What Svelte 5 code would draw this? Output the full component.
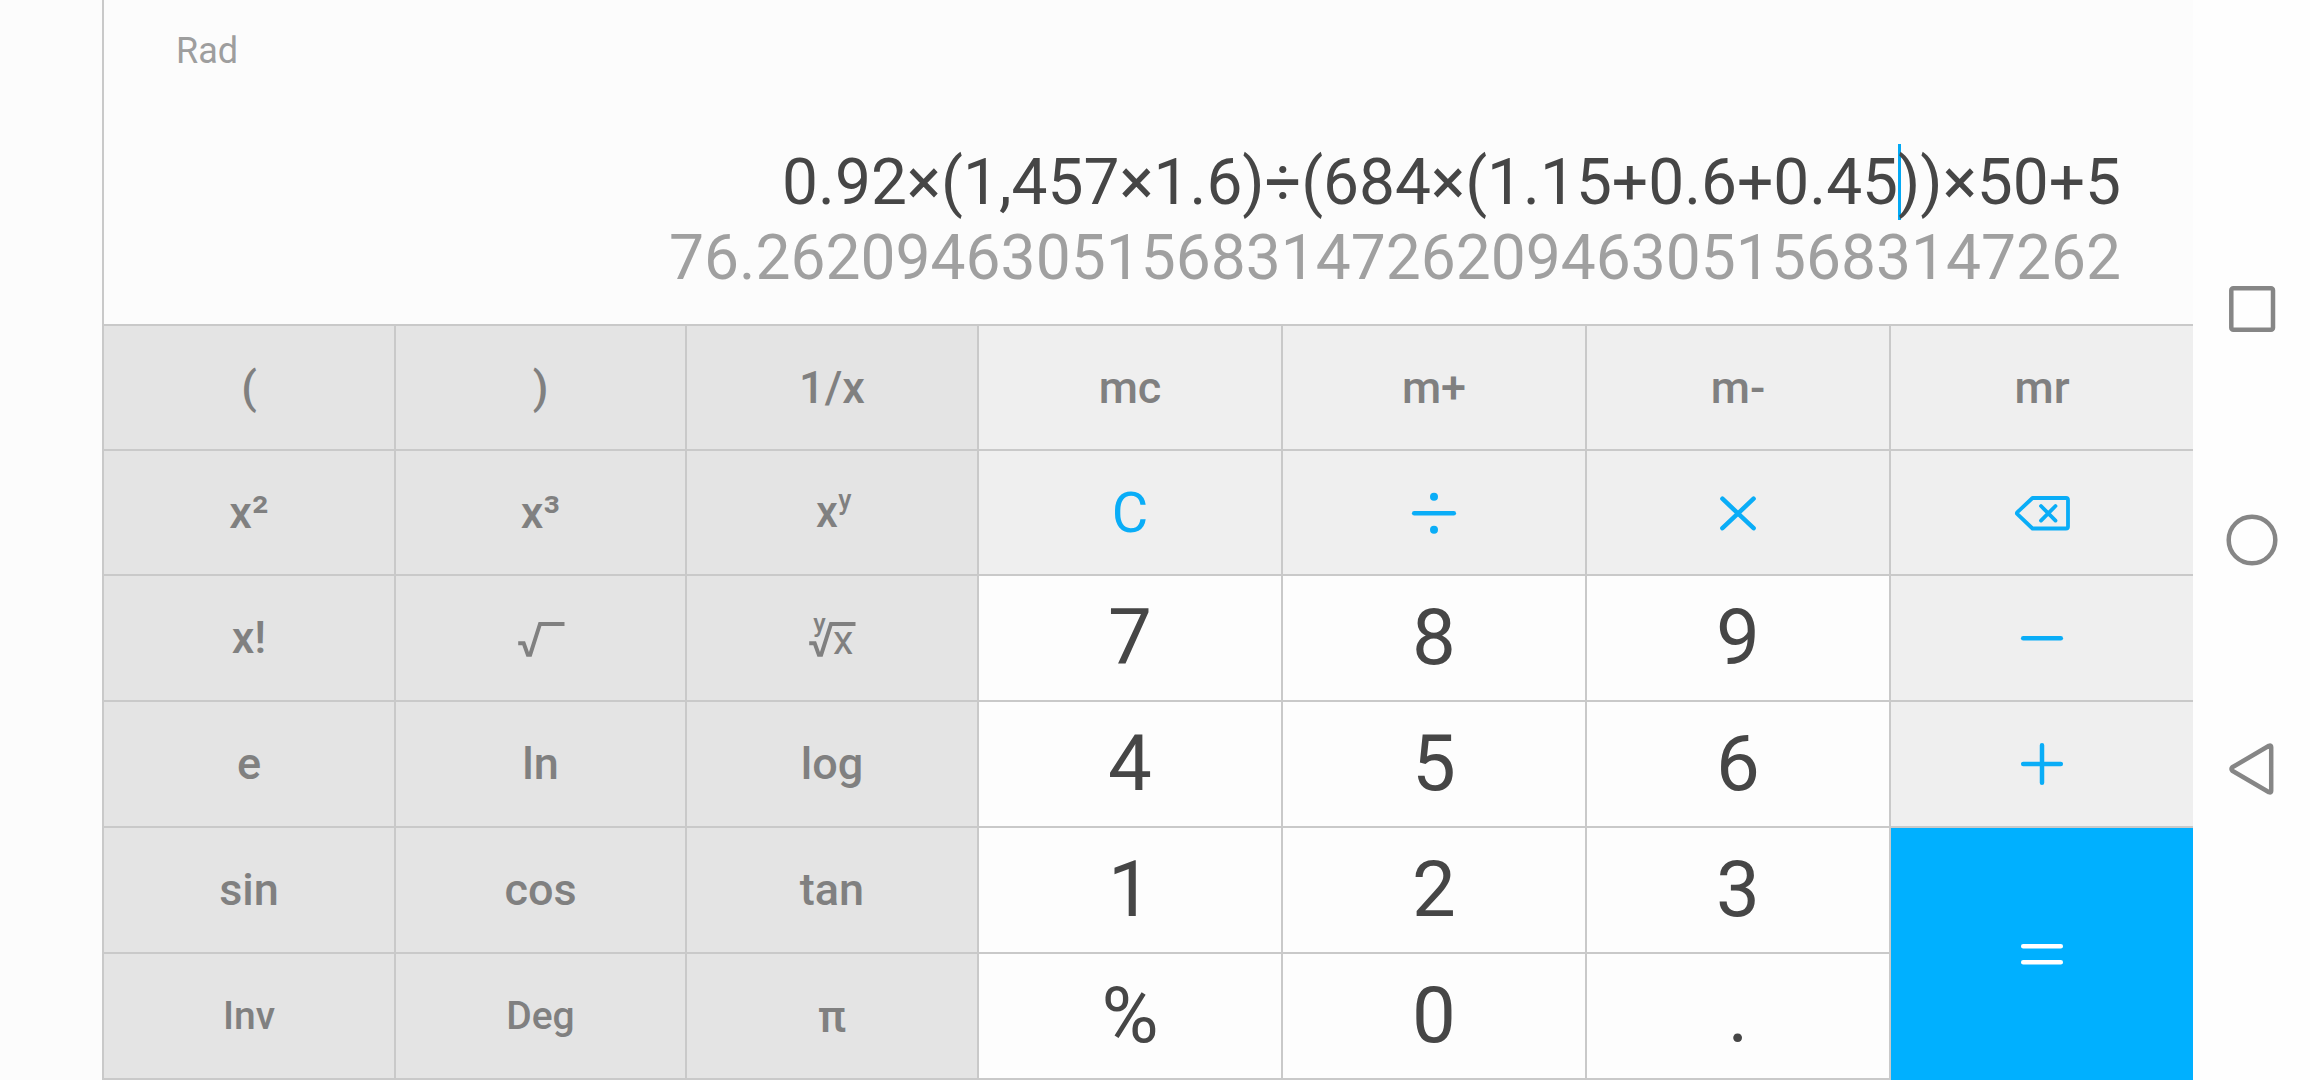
<script>
  const before = '0.92×(1,457×1.6)÷(684×(1.15+0.6+0.45';
  const after = '))×50+5';
  const result = '76.262094630515683147262094630515683147262';

  // kind: sci = scientific, mem = memory/operator, num = digit
  const keys = [
    { t: '(', kind: 'sci' }, { t: ')', kind: 'sci' }, { t: '1/x', kind: 'sci' },
    { t: 'mc', kind: 'mem' }, { t: 'm+', kind: 'mem' }, { t: 'm-', kind: 'mem' }, { t: 'mr', kind: 'mem' },
    { t: 'x²', kind: 'sci' }, { t: 'x³', kind: 'sci' }, { icon: 'pow', kind: 'sci' },
    { t: 'C', kind: 'mem clear' }, { icon: 'divide', kind: 'mem' }, { icon: 'times', kind: 'mem' }, { icon: 'back', kind: 'mem' },
    { t: 'x!', kind: 'sci raised' }, { icon: 'sqrt', kind: 'sci' }, { icon: 'root', kind: 'sci' },
    { t: '7', kind: 'num' }, { t: '8', kind: 'num' }, { t: '9', kind: 'num' }, { icon: 'minus', kind: 'mem' },
    { t: 'e', kind: 'sci raised' }, { t: 'ln', kind: 'sci raised' }, { t: 'log', kind: 'sci raised' },
    { t: '4', kind: 'num' }, { t: '5', kind: 'num' }, { t: '6', kind: 'num' }, { icon: 'plus', kind: 'mem' },
    { t: 'sin', kind: 'sci raised' }, { t: 'cos', kind: 'sci raised' }, { t: 'tan', kind: 'sci raised' },
    { t: '1', kind: 'num' }, { t: '2', kind: 'num' }, { t: '3', kind: 'num' }, { icon: 'equals', kind: 'equals' },
    { t: 'Inv', kind: 'sci small' }, { t: 'Deg', kind: 'sci small' }, { t: 'π', kind: 'sci' },
    { t: '%', kind: 'num' }, { t: '0', kind: 'num' }, { t: '.', kind: 'num' }
  ];
</script>

<div class="screen">
  <div class="gutter"></div>
  <main class="calculator">
    <section class="display">
      <div class="mode">Rad</div>
      <div class="expression">{before}<span class="caret"></span>{after}</div>
      <div class="result">{result}</div>
    </section>
    <section class="pad">
      {#each keys as key}
        <button class="key {key.kind}" aria-label={key.t ?? key.icon}>
          {#if key.t}
            {key.t}
          {:else}
            <svg class="icon" viewBox="-35 -35 70 70">
              {#if key.icon === 'divide'}
                <path d="M-19.800.200H19.800" />
                <circle class="dot" cx="0" cy="-16.200" r="4" />
                <circle class="dot" cx="0" cy="16.700" r="4" />
              {:else if key.icon === 'times'}
                <path d="M-15.600-14.300L15.600 15.200M15.600-14.300L-15.600 15.200" />
              {:else if key.icon === 'minus'}
                <path d="M-18.800.200H18.800" />
              {:else if key.icon === 'plus'}
                <path d="M-18.800 0H18.800M0-18.800V18.800" />
              {:else if key.icon === 'equals'}
                <path d="M-18.800-7.800H18.800M-18.800 8.200H18.800" />
              {:else if key.icon === 'back'}
                <path class="thin" d="M-9.500-15H24Q26-15 26-13V13.500Q26 15.500 24 15.500H-9.500L-24.600 1.200Q-25.600.200-24.600-.800Z" />
                <path class="thin" d="M-1-7L13.500 7.600M13.500-7L-1 7.600" />
              {:else if key.icon === 'sqrt'}
                <path class="radical" d="M-22.800 5.300H-17.300L-13.200 16.700H-10.800L-1-14H23.500" />
              {:else if key.icon === 'root'}
                <path class="radical" d="M-22.800 5.300H-17.300L-13.200 16.700H-10.800L-1-14H23.500" />
                <text x="-18.700" y="-5.800" font-size="25.500">y</text>
                <text class="light" x="1" y="16" font-size="41">x</text>
              {:else if key.icon === 'pow'}
                <text x="-16" y="13.500" font-size="43.500">x</text>
                <text x="6.300" y="-4" font-size="27">y</text>
              {/if}
            </svg>
          {/if}
        </button>
      {/each}
    </section>
  </main>
  <nav class="system">
    <svg viewBox="0 0 117 1080">
      <rect x="38.300" y="288.300" width="41.700" height="41.500" rx="2" />
      <circle cx="59" cy="540" r="23.300" />
      <path d="M39.300 767.300L76 745.800Q78.200 745 78.200 747V791Q78.200 793 76 792.200L39.300 770.700Q37.800 769 39.300 767.300Z" />
    </svg>
  </nav>
</div>

<style>
  :global(body) {
    margin: 0;
    overflow: hidden;
    background: #fdfdfd;
  }

  .screen {
    display: flex;
    width: 2310px;
    height: 1080px;
    font-family: Roboto, sans-serif;
    background: #fcfcfc;
  }

  .gutter {
    width: 102px;
  }

  .calculator {
    display: flex;
    flex-direction: column;
    box-sizing: border-box;
    width: 2091px;
    border-left: 2px solid #c9c9c9;
  }

  .display {
    display: flex;
    flex-direction: column;
    align-items: flex-end;
    box-sizing: border-box;
    height: 324px;
    padding: 30px 72px 0 72px;
    white-space: nowrap;
  }

  .mode {
    align-self: flex-start;
    height: 114px;
    font-size: 36px;
    line-height: 42px;
    color: #9e9e9e;
  }

  .expression {
    height: 76px;
    font-size: 64px;
    line-height: 78px;
    color: #464646;
  }

  .caret {
    display: inline-block;
    width: 3px;
    height: 76px;
    margin-right: -3px;
    vertical-align: top;
    background: #03a9f4;
  }

  .result {
    height: 76px;
    font-size: 62.3px;
    line-height: 76px;
    color: #a0a0a0;
  }

  .pad {
    display: grid;
    flex: 1;
    grid-template-columns: 290px 289px 290px 302px 302px 302px 302px;
    grid-template-rows: 123px 123px 124px 124px 124px 124px;
    gap: 2px;
    padding: 2px 0;
    background: #c9c9c9;
  }

  .key {
    display: flex;
    align-items: center;
    justify-content: center;
    min-width: 0;
    padding: 0;
    border: 0;
    border-radius: 0;
    font-family: inherit;
    font-size: 45px;
    font-weight: 500;
    color: #808080;
  }

  .sci {
    background: #e4e4e4;
  }

  .mem {
    background: #efefef;
  }

  .raised {
    padding-bottom: 2px;
  }

  .small {
    font-size: 39px;
  }

  .num {
    padding-bottom: 2px;
    font-size: 78px;
    font-weight: 400;
    color: #464646;
    background: #fdfdfd;
  }

  .clear {
    font-size: 56px;
    font-weight: 400;
    color: #0aadf7;
  }

  .equals {
    grid-row: span 2;
    margin-bottom: -2px;
    background: #00b0ff;
  }

  .icon {
    width: 70px;
    height: 70px;
    overflow: visible;
    fill: none;
    stroke: #0aadf7;
    stroke-width: 4.500;
    stroke-linecap: round;
    stroke-linejoin: round;
  }

  .equals .icon {
    stroke: #fff;
  }

  .icon .thin {
    stroke-width: 3.800;
  }

  .icon .dot {
    fill: #0aadf7;
    stroke: none;
  }

  .icon .radical {
    stroke: #808080;
    stroke-width: 3.900;
    stroke-linecap: butt;
    stroke-linejoin: miter;
  }

  .icon text {
    font-weight: 500;
    fill: #808080;
    stroke: none;
  }

  .icon .light {
    font-weight: 400;
  }

  .system {
    width: 117px;
    background: #fefefe;
  }

  .system svg {
    display: block;
    width: 117px;
    height: 1080px;
    fill: none;
    stroke: #868686;
    stroke-width: 4.500;
    stroke-linejoin: round;
  }
</style>
